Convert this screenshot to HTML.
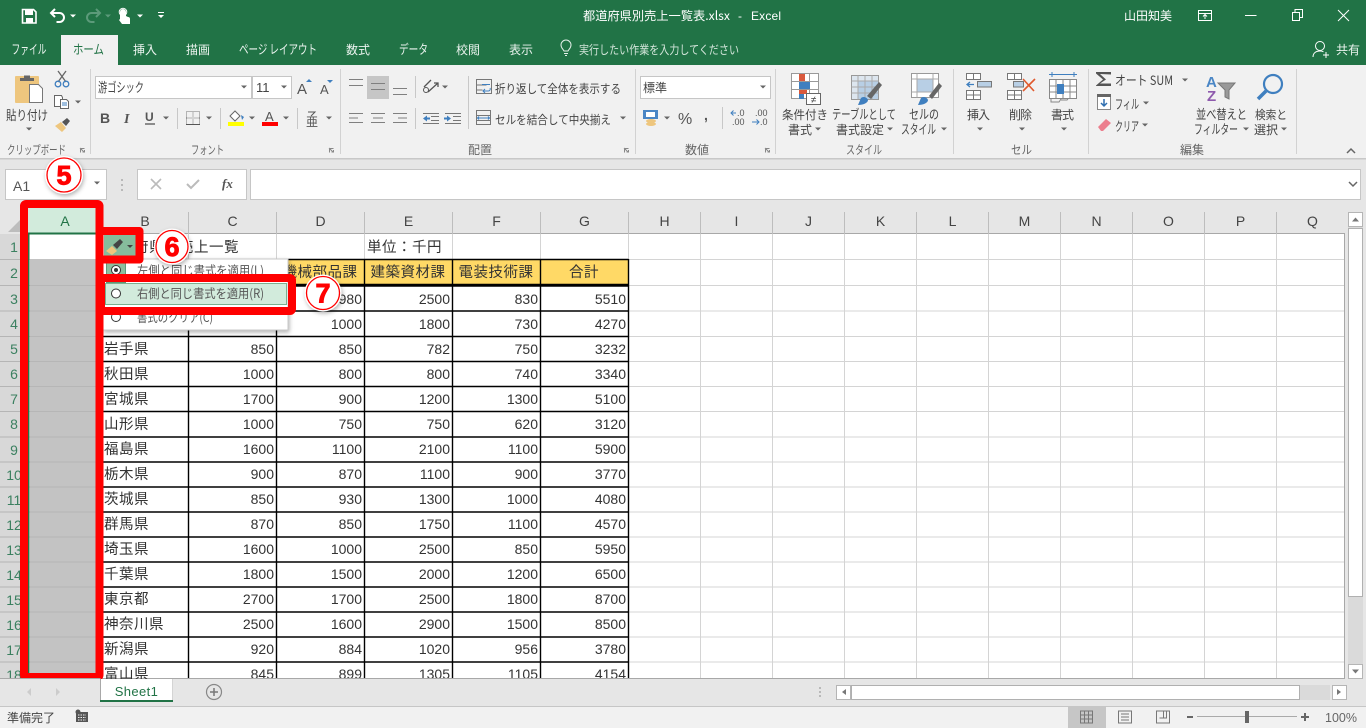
<!DOCTYPE html>
<html lang="ja"><head><meta charset="utf-8"><title>都道府県別売上一覧表.xlsx - Excel</title>
<style>
html,body{margin:0;padding:0;width:1366px;height:728px;overflow:hidden;background:#fff}
svg{display:block;position:absolute;left:0;top:0}
text{font-family:"Liberation Sans","Noto Sans CJK JP",sans-serif;font-size:12px;fill:#444;white-space:pre}
.j{font-family:"Noto Sans CJK JP","Liberation Sans",sans-serif}
.w{fill:#fff}.t{fill:#eaf3ee}
.z{font-size:13px}
.c{font-size:14.5px;fill:#333;font-family:"Noto Sans CJK JP",sans-serif}
.n{font-size:14px;fill:#333;text-anchor:end}
.m{text-anchor:middle}
.h{font-size:14px;fill:#444;text-anchor:middle}
.rn{font-size:14px;fill:#3b8060;text-anchor:middle}
.d{font-family:"Liberation Sans",sans-serif;font-weight:bold;font-size:27px;fill:#f00;stroke:#f00;stroke-width:.9;text-anchor:middle}
</style></head><body>
<svg width="1366" height="728" viewBox="0 0 1366 728" xmlns="http://www.w3.org/2000/svg">
<defs>
<path id="a" d="M-3-1.500h6l-3 3z" fill="#666"/>
<filter id="s" x="-30%" y="-30%" width="170%" height="170%"><feDropShadow dx="1" dy="2" stdDeviation="2" flood-color="#000" flood-opacity=".3"/></filter>
<path id="l" d="M.5 4.500V.5h4M0 0l4 4M2.500 4h2V2" fill="none" stroke="#888"/>
</defs>

<!-- title bar -->
<rect width="1366" height="65" fill="#217346"/>
<rect x="61" y="35" width="57" height="30" fill="#f1f1f1"/>
<!-- QAT -->
<path d="M22.500 9.500h11l2.500 2.500v11h-13.500z" fill="none" stroke="#fff" stroke-width="1.600"/><rect x="25" y="10" width="8" height="5" fill="#fff"/><rect x="26" y="18" width="7" height="5" fill="#fff"/>
<path d="M55 9l-4 4 4 4M51.500 13h8a4.500 4.500 0 0 1 0 9h-3" fill="none" stroke="#fff" stroke-width="2"/><path d="M70 14.500h6l-3 3z" fill="#fff"/>
<path d="M96 9l4 4-4 4M99.500 13h-8a4.500 4.500 0 0 0 0 9h3" fill="none" stroke="#5c9a7a" stroke-width="2"/><path d="M105 14.500h6l-3 3z" fill="#5c9a7a"/>
<path d="M120 19v-7a3 3 0 0 1 6 0v4l2 1a2 2 0 0 1 2 2v5h-8l-3-4z" fill="#fff"/><circle cx="123" cy="12" r="3.800" fill="none" stroke="#fff" stroke-width="1"/><path d="M137 14.500h6l-3 3z" fill="#fff"/>
<path d="M158 12h6v1h-6zM158 15h6l-3 3z" fill="#fff"/>
<text x="583" y="20" class="w j" textLength="147" lengthAdjust="spacingAndGlyphs">都道府県別売上一覧表.xlsx</text>
<text x="738" y="20" class="w">-</text><text x="751" y="20" class="w" textLength="30">Excel</text>
<text x="1124" y="20" class="w j" textLength="48" lengthAdjust="spacingAndGlyphs">山田知美</text>
<path d="M1198.500 10.500h13v10h-13zM1198.500 13.500h13M1205 19v-4M1203 16.500l2-2 2 2" fill="none" stroke="#fff"/>
<path d="M1245 15.500h11.500" stroke="#fff"/>
<path d="M1292.500 12.500h7v8h-7zM1295 12v-2.500h7.500v8H1300" fill="none" stroke="#fff"/>
<path d="M1338 10l11 11M1349 10l-11 11" stroke="#fff" fill="none"/>
<!-- tabs -->
<text x="11.500" y="54" class="t j z" textLength="35" lengthAdjust="spacingAndGlyphs">ファイル</text>
<text x="73" y="54" class="j z" style="fill:#217346" textLength="31" lengthAdjust="spacingAndGlyphs">ホーム</text>
<text x="133" y="54" class="t j" textLength="24">挿入</text>
<text x="186" y="54" class="t j" textLength="24">描画</text>
<text x="239" y="54" class="t j z" textLength="78" lengthAdjust="spacingAndGlyphs">ページ レイアウト</text>
<text x="346" y="54" class="t j" textLength="24">数式</text>
<text x="399" y="54" class="t j z" textLength="29" lengthAdjust="spacingAndGlyphs">データ</text>
<text x="456" y="54" class="t j" textLength="24">校閲</text>
<text x="509" y="54" class="t j" textLength="24">表示</text>
<text x="579" y="54" class="j" style="fill:#d3e5da" textLength="160" lengthAdjust="spacingAndGlyphs">実行したい作業を入力してください</text>
<text x="1336" y="54" class="t j" textLength="24">共有</text>
<path d="M564 51c-1-2-3-3-3-6a5 5 0 0 1 10 0c0 3-2 4-3 6zM564 53.500h4M565 55.500h2" fill="none" stroke="#e6f0ea"/>
<circle cx="1320" cy="46" r="4.500" fill="none" stroke="#fff"/><path d="M1313 57c0-4 3-6 7-6 1.500 0 2.500.3 3.500.8M1323 55h6M1326 52v6" fill="none" stroke="#fff"/>

<!-- ribbon -->
<rect y="65" width="1366" height="93" fill="#f1f1f1"/>
<rect y="158" width="1366" height="1.500" fill="#c8c8c8"/>
<path d="M90.500 69v85M340.500 69v85M635.500 69v85M775.500 69v85M953.500 69v85M1088.500 69v85M1296.500 69v85" stroke="#d2d2d2" fill="none"/>
<!-- labels -->
<text x="7" y="154" class="j" style="fill:#666" textLength="59" lengthAdjust="spacingAndGlyphs">クリップボード</text>
<text x="191" y="154" class="j" style="fill:#666" textLength="33" lengthAdjust="spacingAndGlyphs">フォント</text>
<text x="468" y="154" class="j" style="fill:#666" textLength="24">配置</text>
<text x="685" y="154" class="j" style="fill:#666" textLength="24">数値</text>
<text x="846" y="154" class="j" style="fill:#666" textLength="36" lengthAdjust="spacingAndGlyphs">スタイル</text>
<text x="1011" y="154" class="j" style="fill:#666" textLength="21" lengthAdjust="spacingAndGlyphs">セル</text>
<text x="1180" y="154" class="j" style="fill:#666" textLength="24">編集</text>
<use href="#l" x="80" y="148"/><use href="#l" x="329" y="148"/><use href="#l" x="624" y="148"/><use href="#l" x="765" y="148"/>
<path d="M1347 153l4-4 4 4" fill="none" stroke="#666" stroke-width="1.500"/>

<!-- clipboard -->
<rect x="15" y="76" width="24" height="27" rx="1" fill="#eec67e"/>
<path d="M20 81v-3h4v-2.500h6V78h4v3z" fill="#666"/>
<path d="M29.500 84.500h9l4 4v14h-13z" fill="#fff" stroke="#777"/>
<text x="6" y="120" class="j z" textLength="42" lengthAdjust="spacingAndGlyphs">貼り付け</text>
<use href="#a" x="29" y="129"/>
<path d="M58 71l8 11M66 71l-8 11" stroke="#666" stroke-width="1.300"/><circle cx="58" cy="84" r="2.800" fill="none" stroke="#3f7fbf" stroke-width="1.300"/><circle cx="66" cy="84" r="2.800" fill="none" stroke="#3f7fbf" stroke-width="1.300"/>
<path d="M54.500 95.500h7l1 2v9h-8z" fill="#fff" stroke="#666"/><path d="M60.500 99.500h6l2 2v7h-8z" fill="#fff" stroke="#666"/><path d="M62 103h5M62 105h5" stroke="#3f7fbf"/>
<use href="#a" x="78" y="102"/>
<path d="M55 126l6-4 5 6-4 4z" fill="#eec67e"/><path d="M62 122l5-4 3 3-4 5z" fill="#555"/>
<!-- font -->
<rect x="95.500" y="76.500" width="156" height="22" fill="#fff" stroke="#c6c6c6"/><rect x="252.500" y="76.500" width="39" height="22" fill="#fff" stroke="#c6c6c6"/>
<text x="98" y="92" class="j z" textLength="46" lengthAdjust="spacingAndGlyphs">游ゴシック</text><text x="256" y="92" style="font-size:13px">11</text>
<use href="#a" x="244" y="87"/><use href="#a" x="284" y="87"/>
<text x="297" y="94" style="font-size:15px;fill:#555">A</text><path d="M306 82h6l-3-3z" fill="#3f7fbf"/>
<text x="320" y="94" style="font-size:13px;fill:#555">A</text><path d="M327 80h6l-3 3z" fill="#3f7fbf"/>
<text x="100" y="123" style="font-weight:bold;font-size:14px;fill:#555">B</text>
<text x="124" y="123" style="font-weight:bold;font-style:italic;font-size:14px;font-family:'Liberation Serif',serif;fill:#555">I</text>
<text x="145" y="121" style="font-weight:bold;font-size:12px;fill:#555">U</text><path d="M145 124h10" stroke="#555" stroke-width="1.300"/>
<use href="#a" x="166" y="118"/>
<path d="M177.500 108v21M220.500 108v21M297.500 108v21" stroke="#c8c8c8"/>
<path d="M186.500 111.500h13v13h-13zM193 111.500v13M186.500 118h13" fill="none" stroke="#777" stroke-dasharray="1 1"/><path d="M186 124.500h14" stroke="#555"/>
<use href="#a" x="209" y="118"/>
<path d="M230 116l5-5 5 5-5 5z" fill="#fff" stroke="#666"/><path d="M241 115l3 2-2 3z" fill="#3f7fbf"/><rect x="228" y="122" width="16" height="4" fill="#ff0"/>
<use href="#a" x="252" y="118"/>
<text x="265" y="121" style="font-size:13px;fill:#555">A</text><rect x="262" y="122" width="16" height="4" fill="#f00"/>
<use href="#a" x="286" y="118"/>
<text x="306" y="126" class="j" style="font-size:12px;fill:#555">亜</text><path d="M308 112h7l-4 4" fill="none" stroke="#555"/>
<use href="#a" x="329" y="118"/>
<!-- align -->
<rect x="367" y="76" width="22" height="23" fill="#c6c6c6"/>
<path d="M349 79.500h14M349 85.500h14M371 83.500h14M371 89.500h14M393 88.500h14M393 94.500h14" stroke="#808080" fill="none"/>
<path d="M349 113.500h14M349 118h9M349 122.500h14M371 113.500h14M373 118h10M371 122.500h14M393 113.500h14M398 118h9M393 122.500h14" stroke="#808080" fill="none"/>
<path d="M415.500 76v22M415.500 108v21M468.500 76v53M722.500 107v22" stroke="#c8c8c8"/>
<path d="M424 87l7-7M428 92l10-9M434 83h4v4" fill="none" stroke="#555" stroke-width="1.300"/><circle cx="426" cy="90" r="2.500" fill="none" stroke="#555"/>
<use href="#a" x="445" y="87"/>
<path d="M423 113.500h16M431 116.500h8M431 120.500h8M423 123.500h16M445 113.500h16M445 123.500h16M453 116.500h8M453 120.500h8" stroke="#777" fill="none"/>
<path d="M423 118.500l4-3v2h3v2h-3v2zM451 118.500l-4-3v2h-3v2h3v2z" fill="#3f7fbf"/>
<path d="M476.500 79.500h15v14h-15zM476.500 85h10M476.500 90h6" fill="none" stroke="#777"/><path d="M482 84.500h8M490 88a2 2 0 0 1-2 3h-5M485 89l-2 2 2 2" fill="none" stroke="#3f7fbf"/>
<text x="495" y="93" class="j" textLength="126" lengthAdjust="spacingAndGlyphs">折り返して全体を表示する</text>
<path d="M476.500 110.500h14v14h-14zM476.500 115.500h14M476.500 120.500h14" fill="none" stroke="#777"/><path d="M478 118h11M479 116.500l-1.500 1.500 1.500 1.500M488 116.500l1.500 1.500-1.500 1.500" fill="#f1f1f1" stroke="#3f7fbf"/>
<text x="495" y="124" class="j" textLength="116" lengthAdjust="spacingAndGlyphs">セルを結合して中央揃え</text>
<use href="#a" x="623" y="118"/>
<!-- number -->
<rect x="640.500" y="76.500" width="130" height="22" fill="#fff" stroke="#c6c6c6"/>
<text x="643" y="92" class="j" textLength="24">標準</text><use href="#a" x="763" y="87"/>
<rect x="643" y="110" width="15" height="9" fill="#4a86c5"/><rect x="646" y="112" width="9" height="5" fill="#fff"/><ellipse cx="651" cy="121" rx="5" ry="2" fill="#eec67e"/><ellipse cx="651" cy="124" rx="5" ry="2" fill="#eec67e"/>
<use href="#a" x="667" y="118"/>
<text x="678" y="124" style="font-size:16px;fill:#555">%</text>
<text x="704" y="120" style="font-size:14px;font-weight:bold;fill:#555">,</text>
<text x="737" y="116" style="font-size:9px;fill:#555">.0</text><text x="732" y="125" style="font-size:9px;fill:#555">.00</text><path d="M736 113h-5M733.500 110.500L731 113l2.500 2.500" stroke="#3f7fbf" fill="none"/>
<text x="755" y="116" style="font-size:9px;fill:#555">.00</text><text x="760" y="125" style="font-size:9px;fill:#555">.0</text><path d="M752 122h7M756.500 119.500l2.500 2.500-2.500 2.500" stroke="#3f7fbf" fill="none"/>
<!-- styles -->
<path d="M791.500 73.500h27v25h-27zM791.500 81.500h27M791.500 89.500h27M800.500 73.500v25M809.500 73.500v25" fill="#fff" stroke="#999"/>
<rect x="799" y="74" width="6" height="7" fill="#d9593d"/><rect x="799" y="82" width="11" height="7" fill="#3f7fbf"/><rect x="799" y="90" width="8" height="4" fill="#d9593d"/><rect x="799" y="94" width="5" height="5" fill="#3f7fbf"/>
<rect x="806.500" y="93.500" width="14" height="11" fill="#fff" stroke="#666"/><text x="813.500" y="103" class="m" style="font-size:10px;fill:#444">≠</text>
<text x="782" y="119" class="j" textLength="46" lengthAdjust="spacingAndGlyphs">条件付き</text>
<text x="788" y="134" class="j" textLength="24">書式</text><use href="#a" x="818" y="129"/>
<path d="M851.500 75.500h27v24h-27z" fill="#dde6ef" stroke="#999"/><rect x="858" y="81" width="20" height="18" fill="#b8cfe5"/><path d="M851.500 81h27M851.500 87h27M851.500 93h27M858 75.500v24M865 75.500v24M872 75.500v24" stroke="#aaa" fill="none"/>
<path d="M867 96l12-14 3 3-11 14z" fill="#666"/><path d="M858 105l3-7c2-2 6-1 7 2 0 3-5 5-10 5z" fill="#3f7fbf"/>
<text x="832" y="119" class="j z" textLength="64" lengthAdjust="spacingAndGlyphs">テーブルとして</text>
<text x="836" y="134" class="j" textLength="48" lengthAdjust="spacingAndGlyphs">書式設定</text><use href="#a" x="890" y="129"/>
<path d="M911.500 73.500h27v24h-27z" fill="#fff" stroke="#999"/><rect x="917" y="79" width="16" height="13" fill="#b8cfe5"/><path d="M911.500 79h27M911.500 92h27M917 73.500v24M933 73.500v24" stroke="#aaa" fill="none"/>
<path d="M929 96l10-13 3 3-10 13z" fill="#666"/><path d="M918 105l3-7c2-2 6-1 7 2 0 3-5 5-10 5z" fill="#3f7fbf"/>
<text x="909" y="119" class="j z" textLength="30" lengthAdjust="spacingAndGlyphs">セルの</text>
<text x="901" y="134" class="j z" textLength="35" lengthAdjust="spacingAndGlyphs">スタイル</text><use href="#a" x="944" y="129"/>
<!-- cells -->
<path d="M966.500 73.500h14v6h-14zM973.500 73.500v6M966.500 90.500h14v9h-14zM966.500 95h14M973.500 90.500v9" fill="#fff" stroke="#777"/>
<rect x="977.500" y="81.500" width="14" height="5.500" fill="#b8cfe5" stroke="#777"/><path d="M974 84.500h-7M970 82l-3 2.500 3 2.500" stroke="#3f7fbf" fill="none" stroke-width="1.300"/>
<text x="967" y="119" class="j" textLength="23">挿入</text><use href="#a" x="980" y="129"/>
<path d="M1007.500 73.500h14v6h-14zM1014.500 73.500v6M1007.500 90.500h14v9h-14zM1007.500 95h14M1014.500 90.500v9" fill="#fff" stroke="#777"/>
<rect x="1013.500" y="81.500" width="10" height="5.500" fill="#b8cfe5" stroke="#777"/><path d="M1023 79l11 12M1035 79l-12 12" stroke="#e0592d" stroke-width="1.600"/>
<text x="1009" y="119" class="j" textLength="23">削除</text><use href="#a" x="1022" y="129"/>
<path d="M1049 74.500h28M1052 72v5M1074 72v5" stroke="#3f7fbf" fill="none"/>
<path d="M1049.500 79.500h27v19h-27zM1049.500 86h27M1049.500 92h27M1056 79.500v19M1063 79.500v19M1070 79.500v19" fill="#fff" stroke="#888"/>
<rect x="1057" y="84" width="7" height="10" fill="#3f7fbf"/><path d="M1051 99v3h8l2-3M1061 100h6l1-1" fill="none" stroke="#888"/>
<text x="1051" y="119" class="j" textLength="23">書式</text><use href="#a" x="1064" y="129"/>
<!-- editing -->
<path d="M1111 74.500V72h-15v1.500l7 6-7 6V86h15v-2.500h-11l6-4-6-5.500z" fill="#555"/>
<text x="1115" y="85" class="j z" textLength="58" lengthAdjust="spacingAndGlyphs">オート SUM</text><use href="#a" x="1185" y="80"/>
<rect x="1097.500" y="95.500" width="13" height="14" fill="#fff" stroke="#888"/><rect x="1097" y="94" width="14" height="3" fill="#666"/><path d="M1104 99v7M1101 103l3 3 3-3" fill="none" stroke="#2f6fb0" stroke-width="1.500"/>
<text x="1115" y="109" class="j z" textLength="24" lengthAdjust="spacingAndGlyphs">フィル</text><use href="#a" x="1146" y="103"/>
<path d="M1098 127l8-8 5 4-8 8h-2z" fill="#ec7f8e"/>
<text x="1115" y="131" class="j z" textLength="24" lengthAdjust="spacingAndGlyphs">クリア</text><use href="#a" x="1145" y="125"/>
<text x="1206" y="87" style="font-size:15px;font-weight:bold;fill:#4a86c5">A</text><text x="1207" y="101" style="font-size:15px;font-weight:bold;fill:#8e5aad">Z</text>
<path d="M1218 83h17l-6 7v9l-4-2v-7z" fill="#999" stroke="#777"/>
<text x="1196" y="119" class="j z" textLength="51" lengthAdjust="spacingAndGlyphs">並べ替えと</text>
<text x="1194" y="134" class="j z" textLength="44" lengthAdjust="spacingAndGlyphs">フィルター</text><use href="#a" x="1246" y="129"/>
<circle cx="1273" cy="84" r="9" fill="none" stroke="#3f7fbf" stroke-width="2.200"/><path d="M1266 91l-8 8" stroke="#3f7fbf" stroke-width="3.500"/>
<text x="1255" y="119" class="j" textLength="32" lengthAdjust="spacingAndGlyphs">検索と</text>
<text x="1254" y="134" class="j" textLength="24">選択</text><use href="#a" x="1284" y="129"/>

<!-- formula bar -->
<rect y="159.500" width="1366" height="50" fill="#e6e6e6"/>
<rect x="5.500" y="169.500" width="101" height="30" fill="#fff" stroke="#c6c6c6"/>
<text x="13" y="191" style="font-size:14px;fill:#555">A1</text><use href="#a" x="97" y="183"/>
<path d="M122 179v2M122 184v2M122 189v2" stroke="#aaa" stroke-width="1.500"/>
<rect x="137.500" y="169.500" width="109" height="30" fill="#fff" stroke="#c6c6c6"/>
<rect x="250.500" y="169.500" width="1110" height="30" fill="#fff" stroke="#c6c6c6"/>
<path d="M151 179l10 10M161 179l-10 10" stroke="#bbb" stroke-width="1.600"/><path d="M187 184l4 4 8-8" fill="none" stroke="#bbb" stroke-width="2"/>
<text x="222" y="188" style="font-family:'Liberation Serif',serif;font-style:italic;font-weight:bold;font-size:13px;fill:#555">fx</text>
<path d="M1349 182l4 4 4-4" stroke="#666" stroke-width="1.500" fill="none"/>

<!-- grid -->
<rect y="208" width="1366" height="471" fill="#e6e6e6"/>
<rect x="28" y="234" width="1316" height="444" fill="#fff"/>
<rect x="0" y="234" width="28" height="444" fill="#d8d8d8"/>
<path d="M8 232l12-12v12z" fill="#bdbdbd"/>
<!-- gridlines -->
<g stroke="#d4d4d4" fill="none">
<path d="M100.500 234V678M188.500 234V678M276.500 234V678M364.500 234V678M452.500 234V678M540.500 234V678M628.500 234V678M700.500 234V678M772.500 234V678M844.500 234V678M916.500 234V678M988.500 234V678M1060.500 234V678M1132.500 234V678M1204.500 234V678M1276.500 234V678"/>
<path d="M28 259.500H1344M28 285.500H1344M28 311H1344M28 336.500H1344M28 361.500H1344M28 386.500H1344M28 411.500H1344M28 437H1344M28 462H1344M28 487H1344M28 512H1344M28 537H1344M28 562H1344M28 587H1344M28 612H1344M28 637H1344M28 662H1344"/>
</g>
<path d="M28 233.500H1344.500V678.500H0" stroke="#a8a8a8" fill="none"/>
<path d="M28 259.500H0M28 285.500H0M28 311H0M28 336.500H0M28 361.500H0M28 386.500H0M28 411.500H0M28 437H0M28 462H0M28 487H0M28 512H0M28 537H0M28 562H0M28 587H0M28 612H0M28 637H0M28 662H0" stroke="#b5b5b5" fill="none"/>
<path d="M100.500 212V234M188.500 212V234M276.500 212V234M364.500 212V234M452.500 212V234M540.500 212V234M628.500 212V234M700.500 212V234M772.500 212V234M844.500 212V234M916.500 212V234M988.500 212V234M1060.500 212V234M1132.500 212V234M1204.500 212V234M1276.500 212V234" stroke="#bdbdbd" fill="none"/>
<text y="226" class="h"><tspan x="145">B</tspan><tspan x="232.500">C</tspan><tspan x="320.500">D</tspan><tspan x="408.500">E</tspan><tspan x="496.500">F</tspan><tspan x="584.500">G</tspan><tspan x="664.500">H</tspan><tspan x="736.500">I</tspan><tspan x="808.500">J</tspan><tspan x="880.500">K</tspan><tspan x="952.500">L</tspan><tspan x="1024.500">M</tspan><tspan x="1096.500">N</tspan><tspan x="1168.500">O</tspan><tspan x="1240.500">P</tspan><tspan x="1312.500">Q</tspan></text>
<!-- row numbers -->
<text class="rn"><tspan x="14" y="252">1</tspan><tspan x="14" y="278">2</tspan><tspan x="14" y="304">3</tspan><tspan x="14" y="329">4</tspan><tspan x="14" y="354">5</tspan><tspan x="14" y="379">6</tspan><tspan x="14" y="404">7</tspan><tspan x="14" y="429">8</tspan><tspan x="14" y="455">9</tspan><tspan x="14" y="480">10</tspan><tspan x="14" y="505">11</tspan><tspan x="14" y="530">12</tspan><tspan x="14" y="555">13</tspan><tspan x="14" y="580">14</tspan><tspan x="14" y="605">15</tspan><tspan x="14" y="630">16</tspan><tspan x="14" y="655">17</tspan><tspan x="14" y="680">18</tspan></text>

<!-- table -->
<rect x="276" y="259.500" width="352.500" height="25" fill="#ffd966"/>
<g stroke="#000" stroke-width="1.400" fill="none">
<path d="M101 259.500H628.500M101 284.500H628.500M101 286H628.500M101 311H628.500M101 336.500H628.500M101 361.500H628.500M101 386.500H628.500M101 411.500H628.500M101 437H628.500M101 462H628.500M101 487H628.500M101 512H628.500M101 537H628.500M101 562H628.500M101 587H628.500M101 612H628.500M101 637H628.500M101 662H628.500"/>
<path d="M188.500 259V678M276.500 259V678M364.500 259V678M452.500 259V678M540.500 259V678M628.500 259V678"/>
</g>
<text x="104" y="252" class="c" style="letter-spacing:.5px">都道府県別売上一覧</text>
<text x="367" y="252" class="c" style="letter-spacing:.5px">単位：千円</text>
<text y="277" class="c m" style="letter-spacing:.5px"><tspan x="320">機械部品課</tspan><tspan x="408">建築資材課</tspan><tspan x="496">電装技術課</tspan><tspan x="584">合計</tspan></text>
<text y="304" class="n"><tspan x="362">1980</tspan><tspan x="450">2500</tspan><tspan x="538">830</tspan><tspan x="626">5510</tspan></text>
<text y="329" class="n"><tspan x="362">1000</tspan><tspan x="450">1800</tspan><tspan x="538">730</tspan><tspan x="626">4270</tspan></text>
<g style="letter-spacing:.5px">
<text x="104" y="354" class="c">岩手県</text><text x="104" y="379" class="c">秋田県</text><text x="104" y="404" class="c">宮城県</text><text x="104" y="429" class="c">山形県</text><text x="104" y="454" class="c">福島県</text><text x="104" y="479" class="c">栃木県</text><text x="104" y="504" class="c">茨城県</text><text x="104" y="529" class="c">群馬県</text><text x="104" y="554" class="c">埼玉県</text><text x="104" y="579" class="c">千葉県</text><text x="104" y="604" class="c">東京都</text><text x="104" y="629" class="c">神奈川県</text><text x="104" y="654" class="c">新潟県</text><text x="104" y="679" class="c">富山県</text>
</g>
<text y="354" class="n"><tspan x="274">850</tspan><tspan x="362">850</tspan><tspan x="450">782</tspan><tspan x="538">750</tspan><tspan x="626">3232</tspan></text>
<text y="379" class="n"><tspan x="274">1000</tspan><tspan x="362">800</tspan><tspan x="450">800</tspan><tspan x="538">740</tspan><tspan x="626">3340</tspan></text>
<text y="404" class="n"><tspan x="274">1700</tspan><tspan x="362">900</tspan><tspan x="450">1200</tspan><tspan x="538">1300</tspan><tspan x="626">5100</tspan></text>
<text y="429" class="n"><tspan x="274">1000</tspan><tspan x="362">750</tspan><tspan x="450">750</tspan><tspan x="538">620</tspan><tspan x="626">3120</tspan></text>
<text y="454" class="n"><tspan x="274">1600</tspan><tspan x="362">1100</tspan><tspan x="450">2100</tspan><tspan x="538">1100</tspan><tspan x="626">5900</tspan></text>
<text y="479" class="n"><tspan x="274">900</tspan><tspan x="362">870</tspan><tspan x="450">1100</tspan><tspan x="538">900</tspan><tspan x="626">3770</tspan></text>
<text y="504" class="n"><tspan x="274">850</tspan><tspan x="362">930</tspan><tspan x="450">1300</tspan><tspan x="538">1000</tspan><tspan x="626">4080</tspan></text>
<text y="529" class="n"><tspan x="274">870</tspan><tspan x="362">850</tspan><tspan x="450">1750</tspan><tspan x="538">1100</tspan><tspan x="626">4570</tspan></text>
<text y="554" class="n"><tspan x="274">1600</tspan><tspan x="362">1000</tspan><tspan x="450">2500</tspan><tspan x="538">850</tspan><tspan x="626">5950</tspan></text>
<text y="579" class="n"><tspan x="274">1800</tspan><tspan x="362">1500</tspan><tspan x="450">2000</tspan><tspan x="538">1200</tspan><tspan x="626">6500</tspan></text>
<text y="604" class="n"><tspan x="274">2700</tspan><tspan x="362">1700</tspan><tspan x="450">2500</tspan><tspan x="538">1800</tspan><tspan x="626">8700</tspan></text>
<text y="629" class="n"><tspan x="274">2500</tspan><tspan x="362">1600</tspan><tspan x="450">2900</tspan><tspan x="538">1500</tspan><tspan x="626">8500</tspan></text>
<text y="654" class="n"><tspan x="274">920</tspan><tspan x="362">884</tspan><tspan x="450">1020</tspan><tspan x="538">956</tspan><tspan x="626">3780</tspan></text>
<text y="679" class="n"><tspan x="274">845</tspan><tspan x="362">899</tspan><tspan x="450">1305</tspan><tspan x="538">1105</tspan><tspan x="626">4154</tspan></text>

<!-- vertical scrollbar -->
<rect x="1345" y="208" width="21" height="471" fill="#e6e6e6"/>
<rect x="1348" y="212" width="15" height="466" fill="#dadada"/>
<rect x="1348.500" y="212.500" width="14" height="14" fill="#fff" stroke="#b5b5b5"/><path d="M1352 221.500h7l-3.500-4z" fill="#777"/>
<rect x="1348.500" y="228.500" width="14" height="368" fill="#fff" stroke="#b0b0b0"/>
<rect x="1348.500" y="664.500" width="14" height="14" fill="#fff" stroke="#b5b5b5"/><path d="M1352 669.500h7l-3.500 4z" fill="#777"/>

<!-- menu -->
<rect x="103" y="259" width="185" height="71" fill="#fff" stroke="#c8c8c8" filter="url(#s)"/>
<rect x="106.500" y="262.500" width="19" height="20" fill="#8cbf9f" stroke="#5f9a78"/>
<circle cx="116" cy="270" r="4.500" fill="#fff" stroke="#333"/><circle cx="116" cy="270" r="2" fill="#333"/>
<text x="137" y="275" class="j" style="fill:#555;font-size:12.500px" textLength="127" lengthAdjust="spacingAndGlyphs">左側と同じ書式を適用(L)</text>
<circle cx="116" cy="317" r="4.500" fill="#fff" stroke="#333"/>
<text x="137" y="322" class="j" style="fill:#555;font-size:12.500px" textLength="76" lengthAdjust="spacingAndGlyphs">書式のクリア(C)</text>

<!-- column A selection -->
<rect x="28" y="208" width="68" height="26" fill="#d2ebdc"/>
<text x="65" y="226" class="h" style="fill:#217346">A</text>
<rect x="28" y="232.500" width="68" height="2" fill="#217346"/>
<rect x="28" y="234" width="1.500" height="445" fill="#217346"/>
<rect x="30" y="259" width="66" height="419" fill="#c3c3c3"/>
<path d="M30 285.500H96M30 311H96M30 336.500H96M30 361.500H96M30 386.500H96M30 411.500H96M30 437H96M30 462H96M30 487H96M30 512H96M30 537H96M30 562H96M30 587H96M30 612H96M30 637H96M30 662H96" stroke="#b6b6b6" fill="none"/>

<!-- paste options button -->
<rect x="104" y="235" width="33" height="22" fill="#86bc9c"/>
<path d="M106 251l6-5 5 5-5 4z" fill="#eec67e"/><path d="M113 245l7-6 3 3-6 7z" fill="#444"/><path d="M127 245h6l-3 3z" fill="#444"/>

<!-- right-same highlight -->
<rect x="105.500" y="283.500" width="181" height="21" fill="#d2ebdc" stroke="#7ab08f"/>
<circle cx="116" cy="293.500" r="4.500" fill="#fff" stroke="#333"/>
<text x="137" y="298" class="j" style="fill:#555;font-size:12.500px" textLength="127" lengthAdjust="spacingAndGlyphs">右側と同じ書式を適用(R)</text>

<!-- red frames -->
<g fill="none" stroke="#f00" stroke-width="8" stroke-linejoin="round">
<rect x="24" y="204" width="75.500" height="473" rx="2"/>
<path d="M100 231H139.500V259.500H100"/>
<rect x="101" y="278" width="191" height="33" rx="2"/>
</g>

<!-- number badges -->
<g filter="url(#s)"><circle cx="64" cy="175" r="19" fill="#fff"/></g>
<circle cx="64" cy="175" r="17" fill="#fff" stroke="#f00" stroke-width="1.300"/><text x="64" y="184.500" class="d">5</text>
<g filter="url(#s)"><circle cx="172" cy="246.500" r="18" fill="#fff"/></g>
<circle cx="172" cy="246.500" r="16" fill="#fff" stroke="#f00" stroke-width="1.300"/><text x="172" y="256" class="d">6</text>
<g filter="url(#s)"><circle cx="323" cy="293" r="18.500" fill="#fff"/></g>
<circle cx="323" cy="293" r="16.500" fill="#fff" stroke="#f00" stroke-width="1.300"/><text x="323" y="302.500" class="d">7</text>

<!-- sheet bar -->
<rect y="679" width="1366" height="27" fill="#e6e6e6"/>
<path d="M0 678.500H100M173 678.500H1345" stroke="#a8a8a8"/>
<path d="M100.500 678.500V701M172.500 678.500V701" stroke="#a8a8a8"/>
<rect x="101" y="679" width="71.500" height="21" fill="#fff"/>
<rect x="100" y="700" width="73" height="2" fill="#217346"/>
<text x="136.500" y="696" class="m" style="fill:#217346;font-size:13px;letter-spacing:.4px">Sheet1</text>
<path d="M31 688v8l-4-4zM56 688v8l4-4z" fill="#ccc"/>
<circle cx="214" cy="692" r="7.500" fill="none" stroke="#888" stroke-width="1.200"/><path d="M214 688v8M210 692h8" stroke="#777" stroke-width="1.500"/>
<path d="M820 687v2M820 691v2M820 695v2" stroke="#aaa" stroke-width="1.500"/>
<rect x="836.500" y="685.500" width="14" height="14" fill="#fff" stroke="#b5b5b5"/><path d="M846 689v6l-4-3z" fill="#777"/>
<rect x="851" y="685" width="479" height="15" fill="#dadada"/>
<rect x="851.500" y="685.500" width="448" height="14" fill="#fff" stroke="#b0b0b0"/>
<rect x="1332.500" y="685.500" width="14" height="14" fill="#fff" stroke="#b5b5b5"/><path d="M1337 689v6l4-3z" fill="#777"/>

<!-- status bar -->
<rect y="706" width="1366" height="22" fill="#f1f1f1"/>
<path d="M0 706.500H1366" stroke="#c6c6c6"/>
<text x="7" y="722" class="j" textLength="48" lengthAdjust="spacingAndGlyphs">準備完了</text>
<circle cx="78" cy="712" r="2.500" fill="#555"/><rect x="76" y="712" width="12" height="10" fill="#555"/><path d="M78 715h8M78 717.500h8M78 720h8" stroke="#eee" stroke-dasharray="1.500 1"/>
<rect x="1068" y="707" width="38" height="21" fill="#c6c6c6"/>
<path d="M1080.500 711h12v12h-12zM1084.500 711v12M1088.500 711v12M1080.500 715h12M1080.500 719h12" fill="none" stroke="#777"/>
<path d="M1118.500 711h13v12h-13zM1121 714h8M1121 717h8M1121 720h8" fill="none" stroke="#777"/>
<path d="M1156.500 711h13v12h-13zM1163.500 711v7h-4M1166.500 711v7h-3" fill="none" stroke="#777"/>
<path d="M1187 717h6" stroke="#666" stroke-width="2"/><path d="M1197 716.500h100" stroke="#aaa"/>
<rect x="1245" y="711" width="4" height="12" fill="#666"/>
<path d="M1301 717h8M1305 713v8" stroke="#666" stroke-width="2"/>
<text x="1325" y="722" style="font-size:12.500px;fill:#666">100%</text>
</svg>
</body></html>
